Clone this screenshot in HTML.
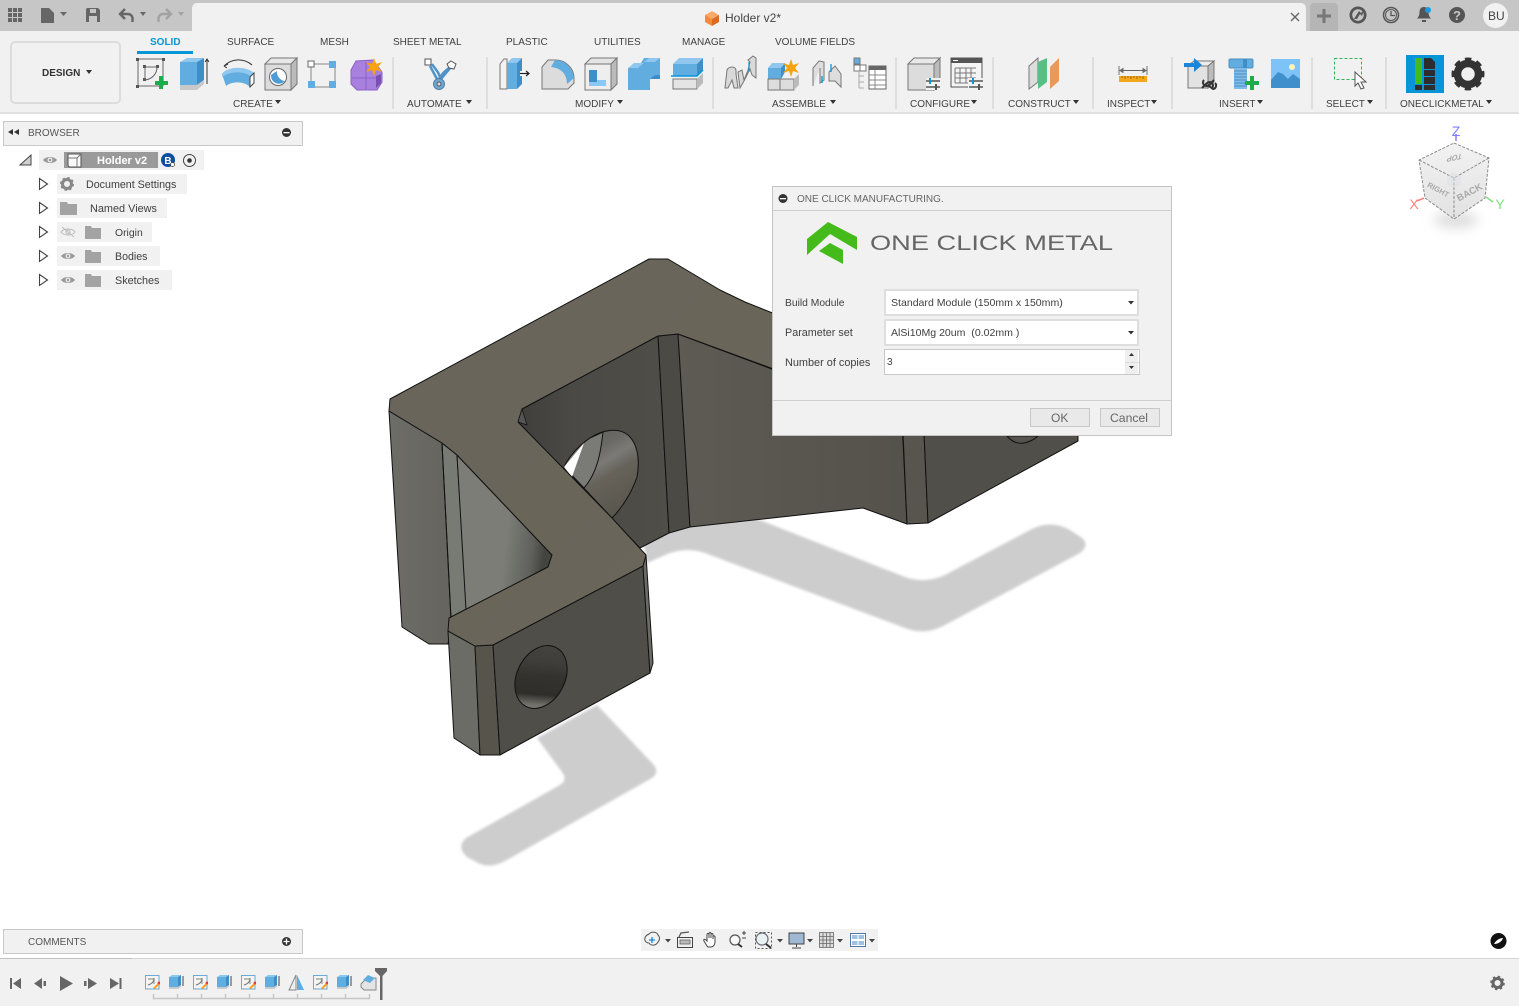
<!DOCTYPE html>
<html><head><meta charset="utf-8"><title>Holder v2</title>
<style>
html,body{margin:0;padding:0;background:#fff;width:1519px;height:1006px;overflow:hidden;font-family:"Liberation Sans",Arial,sans-serif}
#a{position:relative;width:1519px;height:1006px;overflow:hidden}
.b{position:absolute}
.t{position:absolute;white-space:nowrap;font-size:10px;line-height:12px;color:#3f3f3f}
svg{position:absolute;left:0;top:0}
.sel{position:absolute;left:884px;width:251px;background:#fff;border:2px solid #dedede}
</style></head><body><div id="a">

<!-- 3D model -->
<svg width="1519" height="1006" viewBox="0 0 1519 1006">
<defs>
<filter id="bl" x="-5%" y="-5%" width="110%" height="110%"><feGaussianBlur stdDeviation="1.2"/></filter>
<filter id="bl2" x="-40%" y="-80%" width="180%" height="260%"><feGaussianBlur stdDeviation="6"/></filter>
<linearGradient id="top" x1="0" y1="0" x2="1" y2="1"><stop offset="0" stop-color="#69655c"/><stop offset=".5" stop-color="#696559"/><stop offset="1" stop-color="#6a665b"/></linearGradient>
<linearGradient id="inL" x1="0" y1="0" x2="1" y2="0"><stop offset="0" stop-color="#3f3e3b"/><stop offset=".35" stop-color="#4a4945"/><stop offset="1" stop-color="#4f4e48"/></linearGradient>
<linearGradient id="inR" x1="0" y1="0" x2="1" y2="0"><stop offset="0" stop-color="#5d5b54"/><stop offset=".3" stop-color="#5a5850"/><stop offset="1" stop-color="#54524b"/></linearGradient>
<linearGradient id="tri" x1="0" y1="0" x2="1" y2=".2"><stop offset="0" stop-color="#7b7d76"/><stop offset=".6" stop-color="#7b7d76"/><stop offset=".88" stop-color="#5f605b"/><stop offset="1" stop-color="#444440"/></linearGradient>
<linearGradient id="wl" x1="0" y1="0" x2="1" y2="0"><stop offset="0" stop-color="#6d6d68"/><stop offset="1" stop-color="#65645e"/></linearGradient>
<linearGradient id="hb" x1="0" y1="0" x2=".5" y2="1"><stop offset="0" stop-color="#5c5b57"/><stop offset=".35" stop-color="#6a6966"/><stop offset=".5" stop-color="#7b7a76"/><stop offset=".65" stop-color="#66635b"/><stop offset="1" stop-color="#5a574f"/></linearGradient>
<linearGradient id="hf" x1=".3" y1="0" x2=".6" y2="1"><stop offset="0" stop-color="#45443f"/><stop offset=".3" stop-color="#3e3d39"/><stop offset=".5" stop-color="#33322e"/><stop offset=".78" stop-color="#2f2e2b"/><stop offset=".93" stop-color="#6f6e69"/><stop offset="1" stop-color="#7b7a74"/></linearGradient>
<linearGradient id="cube" x1="0" y1="0" x2="0" y2="1"><stop offset="0" stop-color="#f2f2f2"/><stop offset="1" stop-color="#e2e2e2"/></linearGradient>
</defs>

<!-- shadows -->
<g filter="url(#bl)" fill="#cdcdcd">
<path d="M640 520L757 519L905 577Q925 584 945 575L1030 530Q1050 519 1070 530L1082 538Q1090 545 1080 553L945 625Q925 636 905 628L705 553Q685 546 665 555L647 563Z"/>
<path d="M537 738L597 705L653 764Q660 772 652 778L505 861Q490 869 478 863L467 857Q456 847 466 838L560 785Q568 780 562 772Z"/>
</g>

<g stroke="#111" stroke-width="1" stroke-linejoin="round">
<!-- inner back walls -->
<polygon points="522,409 658,336 669,533 640,548 518,422" fill="url(#inL)"/>
<polygon points="658,336 678,334 690,527 669,533" fill="#4c4a45"/>
<polygon points="678,334 780,372 902,420 907,524 863,508 690,527" fill="url(#inR)"/>
<polygon points="902,410 923,410 928,523 907,524" fill="#58554e"/>
<polygon points="923,410 1078,410 1078,441 928,523" fill="#504f49"/>
<path d="M1007 436C1012 442 1018 444 1024 443C1030 442 1036 438 1038 436Z" fill="#55534e"/>
<!-- through hole -->
<path d="M564 467C570 455 580 445 590 438C602 430 618 427 628 435C638 444 640 460 637 477C632 492 622 508 612 518Z" fill="url(#hb)"/>
<path d="M603 432C601 450 598 472 584 488L564 467C570 455 580 445 590 438Z" fill="#7a7a76"/>
<polygon points="564,467 584,443 572,477" fill="#fff" stroke="none"/>
<!-- left wall -->
<polygon points="389,411 442,443 452,620 448,644 429,644 402,627" fill="url(#wl)"/>
<polygon points="442,443 457,455 467,612 449,622 452,640" fill="#787a74"/>
<polygon points="457,455 552,555 548,567 466,610" fill="url(#tri)"/>
<line x1="442" y1="443" x2="451" y2="618"/>
<!-- front faces -->
<polygon points="448,631 475,646 480,755 454,738" fill="#6c6c67"/>
<polygon points="475,646 493,645 500,755 480,755" fill="#57544c"/>
<polygon points="493,645 643,566 650,673 500,755" fill="#4f4e48"/>
<polygon points="643,566 646,555 653,663 650,673" fill="#6c6c66"/>
<!-- top face -->
<polygon points="390,399 649,259 668,259 720,290 745,302 790,320 790,375 678,334 658,336 522,409 518,422 612,518 646,555 643,566 493,645 475,646 448,631 449,618 548,567 552,555 457,455 442,443 389,411" fill="url(#top)"/>
<!-- front hole -->
<ellipse cx="541" cy="677" rx="24" ry="33" transform="rotate(27 541 677)" fill="url(#hf)"/>
<polygon points="518,422 522,409 527,425" fill="#555" stroke-width=".7"/>
</g>
</svg>

<!-- top bar -->
<div class="b" style="left:0;top:0;width:1519px;height:31px;background:#c6c6c6"></div>
<div class="b" style="left:192px;top:3px;width:1114px;height:28px;background:#f1f1f1;border-radius:5px 5px 0 0"></div>
<div class="b" style="left:1310px;top:3px;width:28px;height:28px;background:#b5b5b5;border-radius:4px 4px 0 0"></div>
<div class="b" style="left:1483px;top:3px;width:25px;height:25px;background:#f1f1f1;border-radius:50%"></div>
<div class="t" style="left:1488px;top:9px;font-size:12px;line-height:14px;color:#444">BU</div>
<div class="t" style="left:725px;top:11px;font-size:12px;line-height:14px;color:#444">Holder v2*</div>

<!-- toolbar -->
<div class="b" style="left:0;top:31px;width:1519px;height:81px;background:#f1f1f1;border-bottom:2px solid #e0e0e0"></div>
<div class="b" style="left:10px;top:41px;width:107px;height:59px;border:2px solid #dcdcdc;border-radius:5px"></div>
<div class="t" style="left:42px;top:68px;font-weight:bold;color:#333">DESIGN</div>
<div class="t" style="left:150px;top:37px;color:#0696d7;font-weight:bold">SOLID</div>
<div class="b" style="left:137px;top:51px;width:56px;height:3px;background:#0696d7"></div>
<div class="t" style="left:227px;top:37px">SURFACE</div>
<div class="t" style="left:320px;top:37px">MESH</div>
<div class="t" style="left:393px;top:37px">SHEET METAL</div>
<div class="t" style="left:506px;top:37px">PLASTIC</div>
<div class="t" style="left:594px;top:37px">UTILITIES</div>
<div class="t" style="left:682px;top:37px">MANAGE</div>
<div class="t" style="left:775px;top:37px">VOLUME FIELDS</div>

<div class="t" style="left:233px;top:99px">CREATE</div>
<div class="t" style="left:407px;top:99px">AUTOMATE</div>
<div class="t" style="left:575px;top:99px">MODIFY</div>
<div class="t" style="left:772px;top:99px">ASSEMBLE</div>
<div class="t" style="left:910px;top:99px">CONFIGURE</div>
<div class="t" style="left:1008px;top:99px">CONSTRUCT</div>
<div class="t" style="left:1107px;top:99px">INSPECT</div>
<div class="t" style="left:1219px;top:99px">INSERT</div>
<div class="t" style="left:1326px;top:99px">SELECT</div>
<div class="t" style="left:1400px;top:99px">ONECLICKMETAL</div>

<!-- browser -->
<div class="b" style="left:3px;top:121px;width:298px;height:23px;background:#f1f1f1;border:1px solid #c8c8c8"></div>
<div class="t" style="left:28px;top:128px;color:#555">BROWSER</div>
<div class="b" style="left:39px;top:150px;width:165px;height:20px;background:#f1f1f1"></div>
<div class="b" style="left:64px;top:152px;width:94px;height:16px;background:#9a9a9a"></div>
<div class="t" style="left:97px;top:155px;color:#fff;font-weight:bold;font-size:11px">Holder v2</div>
<div class="b" style="left:57px;top:174px;width:130px;height:20px;background:#f1f1f1"></div>
<div class="t" style="left:86px;top:179px;font-size:10.7px">Document Settings</div>
<div class="b" style="left:57px;top:198px;width:110px;height:20px;background:#f1f1f1"></div>
<div class="t" style="left:90px;top:203px;font-size:10.9px">Named Views</div>
<div class="b" style="left:57px;top:222px;width:95px;height:20px;background:#f1f1f1"></div>
<div class="t" style="left:115px;top:228px;font-size:10.4px">Origin</div>
<div class="b" style="left:57px;top:246px;width:103px;height:20px;background:#f1f1f1"></div>
<div class="t" style="left:115px;top:251px;font-size:10.6px">Bodies</div>
<div class="b" style="left:57px;top:270px;width:115px;height:20px;background:#f1f1f1"></div>
<div class="t" style="left:115px;top:275px;font-size:10.8px">Sketches</div>

<!-- comments -->
<div class="b" style="left:3px;top:929px;width:298px;height:23px;background:#f1f1f1;border:1px solid #c8c8c8"></div>
<div class="t" style="left:28px;top:937px;color:#555">COMMENTS</div>
<div class="b" style="left:641px;top:929px;width:237px;height:22px;background:#f1f1f1"></div>

<!-- timeline -->
<div class="b" style="left:0;top:958px;width:1519px;height:48px;background:#f1f1f1;border-top:1px solid #d4d4d4;box-sizing:border-box"></div>
<div class="b" style="left:0;top:958px;width:132px;height:1px;background:#c0c0c0"></div>

<!-- dialog -->
<div class="b" style="left:772px;top:186px;width:398px;height:248px;background:#f1f1f1;border:1px solid #c4c4c4"></div>
<div class="b" style="left:773px;top:210px;width:398px;height:1px;background:#cfcfcf"></div>
<div class="t" style="left:797px;top:194px;color:#666">ONE CLICK MANUFACTURING.</div>
<div class="t" style="left:785px;top:298px;font-size:10.3px">Build Module</div>
<div class="t" style="left:785px;top:327px;font-size:10.8px">Parameter set</div>
<div class="t" style="left:785px;top:357px;font-size:10.9px">Number of copies</div>
<div class="sel" style="top:289px;height:23px"></div>
<div class="sel" style="top:319px;height:23px"></div>
<div class="t" style="left:891px;top:297px;font-size:10.55px">Standard Module (150mm x 150mm)</div>
<div class="t" style="left:891px;top:327px;font-size:10.55px">AlSi10Mg 20um&nbsp; (0.02mm )</div>
<div class="b" style="left:884px;top:349px;width:254px;height:24px;background:#fff;border:1px solid #c8c8c8"></div>
<div class="b" style="left:1125px;top:350px;width:13px;height:24px;background:#efefef"></div>
<div class="t" style="left:887px;top:357px">3</div>
<div class="b" style="left:773px;top:400px;width:398px;height:1px;background:#cfcfcf"></div>
<div class="b" style="left:1030px;top:408px;width:58px;height:17px;background:#e9e9e9;border:1px solid #c8c8c8"></div>
<div class="t" style="left:1051px;top:411px;font-size:12px;line-height:14px;color:#666">OK</div>
<div class="b" style="left:1100px;top:408px;width:58px;height:17px;background:#e9e9e9;border:1px solid #c8c8c8"></div>
<div class="t" style="left:1110px;top:411px;font-size:12.2px;line-height:14px;color:#666">Cancel</div>

<!-- icons -->
<svg width="1519" height="1006" viewBox="0 0 1519 1006">
<defs>
<symbol id="sk" viewBox="0 0 15 16" width="15" height="16"><rect x=".5" y="1.5" width="13.5" height="13.5" fill="#f4f4f4" stroke="#6aa9d8"/><path d="M3 5h6v5" fill="none" stroke="#888"/><path d="M9 4C9 8 7 10 3 11" fill="none" stroke="#777"/><path d="M8 14l5-5 2 1-5 5z" fill="#f5a623"/><circle cx="14" cy="9" r="1.4" fill="#e33"/></symbol>
<symbol id="ex" viewBox="0 0 15 16" width="15" height="16"><polygon points="0,3 3,1 12,1 9,3" fill="#8fc7ef"/><rect x="0" y="3" width="9" height="10" fill="#62addf"/><polygon points="9,3 12,1 12,11 9,13" fill="#3e8ec9"/><polygon points="0,13 9,13 12,11 12,13 9,15 0,15" fill="#c9c9c9"/><path d="M14 2v10" stroke="#444"/></symbol>
</defs>

<!-- top bar icons -->
<g fill="#666"><rect x="8" y="8" width="4" height="4"/><rect x="13" y="8" width="4" height="4"/><rect x="18" y="8" width="4" height="4"/><rect x="8" y="13" width="4" height="4"/><rect x="13" y="13" width="4" height="4"/><rect x="18" y="13" width="4" height="4"/><rect x="8" y="18" width="4" height="4"/><rect x="13" y="18" width="4" height="4"/><rect x="18" y="18" width="4" height="4"/>
<path d="M41 8h8l5 5v10h-13z"/><polygon points="60,12 67,12 63.5,16"/>
<path d="M87 8h11l2 2v12h-14v-13z"/>
<polygon points="140,12 146,12 143,16" fill="#666"/></g>
<rect x="90" y="9" width="6" height="4" fill="#c6c6c6"/><rect x="89" y="16" width="8" height="6" fill="#c6c6c6"/>
<path d="M125 9l-5 5 5 5M120 14h8a4.500 4.500 0 0 1 4.500 4.500v3.500" fill="none" stroke="#666" stroke-width="2.400"/>
<path d="M166 9l5 5-5 5M171 14h-8a4.500 4.500 0 0 0-4.500 4.500v3.500" fill="none" stroke="#a2a2a2" stroke-width="2.400"/>
<polygon points="178,12 184,12 181,16" fill="#a2a2a2"/>
<polygon points="712,11 719,15 712,19 705,15" fill="#fba968"/><polygon points="705,15 712,19 712,26 705,22" fill="#f58a3e"/><polygon points="719,15 712,19 712,26 719,22" fill="#dc6a20"/>
<path d="M1291 13l8 8M1299 13l-8 8" stroke="#666" stroke-width="1.400"/>
<path d="M1324 9v14M1317 16h14" stroke="#777" stroke-width="3"/>
<circle cx="1358" cy="15" r="7" fill="none" stroke="#555" stroke-width="2.500"/><path d="M1354 19l5-8 2 2 3-3-2 6-2-2-3 5z" fill="#555"/><circle cx="1358" cy="15" r="8" fill="none" stroke="#555"/>
<circle cx="1391" cy="15" r="7.500" fill="none" stroke="#555" stroke-width="1.500"/><circle cx="1391" cy="15" r="5.500" fill="none" stroke="#555"/><path d="M1391 11v4.500h4" fill="none" stroke="#555" stroke-width="1.300"/>
<path d="M1424 7c-3 0-4.500 2-4.500 5 0 3-1 5-2.500 6.500h14c-1.500-1.500-2.500-3.500-2.500-6.500 0-3-1.500-5-4.500-5z" fill="#555"/><rect x="1422" y="20" width="4" height="2" fill="#555"/><circle cx="1428" cy="10" r="3" fill="#1b9be2"/>
<circle cx="1457" cy="15" r="8" fill="#555"/><text x="1457" y="20" text-anchor="middle" font-family="Liberation Sans" font-weight="bold" font-size="13" fill="#c6c6c6">?</text>

<!-- carets -->
<g fill="#333"><polygon points="86,70 92,70 89,74"/><polygon points="275,100 281,100 278,104"/><polygon points="466,100 472,100 469,104"/><polygon points="617,100 623,100 620,104"/><polygon points="830,100 836,100 833,104"/><polygon points="971,100 977,100 974,104"/><polygon points="1073,100 1079,100 1076,104"/><polygon points="1151,100 1157,100 1154,104"/><polygon points="1257,100 1263,100 1260,104"/><polygon points="1367,100 1373,100 1370,104"/><polygon points="1486,100 1492,100 1489,104"/></g>
<!-- separators -->
<g fill="#dedede"><rect x="392" y="57" width="2" height="52"/><rect x="486" y="57" width="2" height="52"/><rect x="712" y="57" width="2" height="52"/><rect x="895" y="57" width="2" height="52"/><rect x="992" y="57" width="2" height="52"/><rect x="1092" y="57" width="2" height="52"/><rect x="1171" y="57" width="2" height="52"/><rect x="1311" y="57" width="2" height="52"/><rect x="1385" y="57" width="2" height="52"/></g>

<!-- CREATE -->
<rect x="138" y="59" width="25" height="27" fill="none" stroke="#666"/>
<g fill="#555"><rect x="136" y="58" width="3" height="3"/><rect x="162" y="58" width="3" height="3"/><rect x="136" y="85" width="3" height="3"/><rect x="143" y="65" width="3" height="3"/><rect x="156" y="65" width="3" height="3"/><rect x="143" y="78" width="3" height="3"/></g>
<path d="M145 67h12M157 67C157 73 153 79 145 80M145 67v13" fill="none" stroke="#666"/>
<path d="M161 76v13M155 83h13" stroke="#1faa4c" stroke-width="4"/>
<polygon points="180,62 187,58 204,58 197,62" fill="#8fc7ef"/><rect x="180" y="62" width="17" height="23" fill="#62addf"/><polygon points="197,62 204,58 204,80 197,85" fill="#3e8ec9"/><polygon points="180,85 197,85 204,80 204,84 197,90 180,90" fill="#c8c8c8"/><path d="M207 84V60M205 62l2-3 2 3" fill="none" stroke="#333" stroke-width="1"/>
<path d="M222 74C228 66 246 66 254 73L250 87C244 81 232 81 226 86Z" fill="#62addf"/><path d="M222 74C228 66 246 66 254 73L250 76C244 71 230 71 222 77Z" fill="#8fc7ef"/><path d="M224 66C232 58 244 58 252 65M224 66l4-2M224 66l3 2" fill="none" stroke="#333"/><path d="M250 77l4-4v10l-4 4z" fill="#fff" stroke="#444"/>
<polygon points="265,64 271,58 297,58 291,64" fill="#e8e8e8" stroke="#777"/><rect x="265" y="64" width="26" height="26" fill="#dcdcdc" stroke="#777"/><polygon points="291,64 297,58 297,84 291,90" fill="#bbb" stroke="#777"/><circle cx="278" cy="77" r="8.500" fill="#fff" stroke="#666"/><path d="M271 75a8 8 0 0 0 14 6 9 9 0 0 1-8-10z" fill="#4e9bd6"/>
<path d="M311 64h21M311 64v23M311 87h21M335 64v23" stroke="#888" fill="none"/><rect x="308" y="61" width="6" height="6" fill="#fff" stroke="#666"/><rect x="329" y="61" width="7" height="7" fill="#62addf"/><rect x="308" y="81" width="7" height="7" fill="#62addf"/><rect x="329" y="81" width="7" height="7" fill="#62addf"/>
<path d="M351 70l5-9 17-1 9 12v10l-5 8h-20l-6-6z" fill="#a880de" stroke="#8a5fc8"/><path d="M352 78h28M366 62v27" stroke="#8a5fc8"/><path d="M376 76v12l5-5v-9z" fill="#7a4fb4"/>
<polygon points="374,58 376,64 382,62 378,67 382,72 376,70 374,76 372,70 366,72 370,67 366,62 372,64" fill="#f9a30e"/>

<!-- AUTOMATE -->
<path d="M430 66l7 13M451 67l-10 12M439 78v7M432 64c3 5 8 9 8 15M449 68c-5 4-8 6-9 12" fill="none" stroke="#4f93c8" stroke-width="2.500"/><rect x="425" y="59" width="6" height="6" fill="#fff" stroke="#555"/><polygon points="451,61 456,64 454,69 449,68 447,64" fill="#fff" stroke="#555"/><circle cx="439" cy="84" r="5.500" fill="#6fa7d4" stroke="#4f7ea8"/><circle cx="439" cy="84" r="2" fill="#ddd" stroke="#555"/>

<!-- MODIFY -->
<path d="M500 64l4-5h3v30h-7z" fill="#f2f2f2" stroke="#777"/><polygon points="507,63 512,58 522,58 517,63" fill="#8fc7ef"/><rect x="507" y="63" width="10" height="26" fill="#62addf"/><polygon points="517,63 522,58 522,84 517,89" fill="#3e8ec9"/><rect x="520" y="71" width="8" height="5" fill="#fff"/><path d="M520 73.500h9M526 71l3 2.500-3 2.500" fill="none" stroke="#222" stroke-width="1.200"/>
<path d="M542 67l6-7h8c9 0 18 8 18 18v5l-6 6h-26z" fill="#dcdcdc" stroke="#777"/><path d="M555 60c10 0 18 8 19 18l-7 6c0-10-6-16-16-17z" fill="#62addf"/>
<polygon points="585,64 591,58 617,58 611,64" fill="#e4e4e4" stroke="#777"/><rect x="585" y="64" width="26" height="26" fill="#eee" stroke="#777"/><polygon points="611,64 617,58 617,84 611,90" fill="#bbb" stroke="#777"/><polygon points="589,70 597,70 597,80 606,80 606,86 589,86" fill="#8ac8f4"/><rect x="589" y="70" width="8" height="12" fill="#3e8ec9"/>
<polygon points="638,68 644,58 660,58 660,79 650,79 650,90 628,90 628,68" fill="#62addf"/><polygon points="628,68 634,63 644,63 638,68" fill="#8fc7ef"/><polygon points="644,62 649,58 660,58 655,62" fill="#8fc7ef"/><polygon points="650,79 655,75 660,75 660,79" fill="#3e8ec9"/>
<polygon points="673,64 679,58 703,58 697,64" fill="#8fc7ef"/><rect x="673" y="64" width="24" height="12" fill="#62addf"/><polygon points="697,64 703,58 703,70 697,76" fill="#3e8ec9"/><path d="M671 76h26l6-6" fill="none" stroke="#0696d7" stroke-width="1.500"/><rect x="673" y="79" width="24" height="10" fill="#e4e4e4" stroke="#777"/><polygon points="697,79 703,73 703,83 697,89" fill="#bbb"/>

<!-- ASSEMBLE -->
<g fill="#d9d9d9" stroke="#777"><path d="M725 88l2-18c2-4 8-4 9 0v4l2 14h-4l-2-8-4 8z"/><path d="M740 88l-2-16 4-2 2 10 4-10 2-8-2-2 5-4 3 2v20l-4-3-2-6-6 12z"/></g><path d="M749 62v10" stroke="#0696d7" stroke-width="1.200"/>
<polygon points="768,68 772,63 785,63 781,68" fill="#8fc7ef"/><rect x="768" y="68" width="13" height="11" fill="#62addf"/><polygon points="781,68 785,63 785,72 781,79" fill="#3e8ec9"/><rect x="768" y="79" width="12" height="11" fill="#ddd" stroke="#777"/><rect x="780" y="79" width="14" height="11" fill="#ddd" stroke="#777"/><polygon points="794,79 799,74 799,85 794,90" fill="#bbb"/>
<polygon points="791,59 793,65 799,63 795,68 799,73 793,71 791,77 789,71 783,73 787,68 783,63 789,65" fill="#f9a30e"/>
<path d="M813 86V68l6-7 5 1v18l-4 3v-15" fill="#ddd" stroke="#777"/><path d="M829 72l6-6 6 8v13l-6-6h-6z" fill="#ddd" stroke="#777"/><path d="M822 76v7M831 64v8" stroke="#0696d7" stroke-width="1.300"/>
<rect x="854" y="58" width="6" height="6" fill="#62addf" stroke="#777"/><rect x="854" y="65" width="6" height="6" fill="#fff" stroke="#777"/><rect x="860" y="65" width="6" height="6" fill="#fff" stroke="#777"/><path d="M859 71v17M859 76h5M859 82h5M859 88h5" stroke="#aaa" fill="none"/><rect x="869" y="66" width="17" height="23" fill="#fff" stroke="#666"/><rect x="869" y="66" width="17" height="4" fill="#666"/><path d="M869 75h17M869 80h17M869 85h17M875 70v19" stroke="#888"/>

<!-- CONFIGURE -->
<polygon points="908,64 914,58 940,58 934,64" fill="#e8e8e8" stroke="#777"/><rect x="908" y="64" width="26" height="26" fill="#dcdcdc" stroke="#777"/><polygon points="934,64 940,58 940,84 934,90" fill="#bbb" stroke="#777"/>
<rect x="926" y="78" width="15" height="12" fill="#f1f1f1"/><path d="M926 81h14M926 87h14" stroke="#555" stroke-width="1.500"/><rect x="929" y="78" width="2" height="6" fill="#0696d7"/><rect x="935" y="84" width="2" height="6" fill="#555"/>
<rect x="951" y="58" width="31" height="29" fill="#f4f4f4" stroke="#555"/><rect x="951" y="58" width="31" height="5" fill="#555"/><rect x="953" y="60" width="5" height="1" fill="#fff"/><path d="M955 68h21M955 73h21M955 78h21M955 83h15M955 68v15M960 68v15M966 68v15M971 68v15" stroke="#777" fill="none"/>
<rect x="968" y="78" width="15" height="12" fill="#f1f1f1"/><path d="M969 81h14M969 87h14" stroke="#555" stroke-width="1.500"/><rect x="972" y="78" width="2" height="6" fill="#0696d7"/><rect x="978" y="84" width="2" height="6" fill="#555"/>

<!-- CONSTRUCT -->
<polygon points="1029,66 1038,58 1038,82 1029,89" fill="#ddd" stroke="#777"/><polygon points="1038,62 1047,58 1047,82 1038,89" fill="#57c084"/><polygon points="1050,67 1059,58 1059,81 1050,89" fill="#e89a5c"/>

<!-- INSPECT -->
<rect x="1119" y="76" width="28" height="6" fill="#f5a81c"/><path d="M1119 66v9M1147 66v9M1120 70.500h26M1120 70.500l3-2v4zM1146 70.500l-3-2v4z" stroke="#666" fill="#666" stroke-width=".9"/><path d="M1122 76v2M1125 76v3M1128 76v2M1131 76v3M1134 76v2M1137 76v3M1140 76v2M1143 76v3" stroke="#a06a00"/>

<!-- INSERT -->
<polygon points="1188,66 1194,61 1214,61 1208,66" fill="#ececec" stroke="#777"/><rect x="1188" y="66" width="20" height="22" fill="#e2e2e2" stroke="#777"/><polygon points="1208,66 1214,61 1214,82 1208,88" fill="#bbb" stroke="#777"/>
<path d="M1184 63h10v-5l8 7-8 7v-5h-10z" fill="#1b86d6"/>
<path d="M1202 88l5-5a3.500 3.500 0 0 1 5 5M1214 80l-5 5a3.500 3.500 0 0 1-5-5M1209 86l4 3a3.500 3.500 0 0 0 2-6" fill="none" stroke="#333" stroke-width="2"/>
<rect x="1229" y="59" width="24" height="9" rx="1.500" fill="#62addf" stroke="#4f8fc0"/><rect x="1234" y="68" width="13" height="21" fill="#7fbce8"/><path d="M1234 71h13M1234 74h13M1234 77h13M1234 80h13M1234 83h13M1234 86h13" stroke="#4f8fc0"/><rect x="1243" y="59" width="4" height="9" fill="#3e8ec9"/>
<path d="M1252 76v14M1245 83h14" stroke="#1faa4c" stroke-width="4"/>
<rect x="1271" y="59" width="29" height="29" fill="#7dc3f8"/><path d="M1271 80l7-8 5 2 5 5 5-5 7 5v9h-29z" fill="#3f8fcc"/><circle cx="1292" cy="67" r="3" fill="#fff3b8"/>

<!-- SELECT -->
<rect x="1334.500" y="58.500" width="27" height="21" fill="none" stroke="#31b45b" stroke-dasharray="3 2"/>
<path d="M1355 72l0 14 3-3 3 6 3-1-3-6h5z" fill="#fff" stroke="#555"/>

<!-- ONECLICKMETAL -->
<rect x="1406" y="55" width="38" height="38" fill="#0696d7"/><rect x="1415" y="58" width="7" height="26" fill="#44bb1a"/><path d="M1424 58h7l4 4v7h-11zM1424 70h11v6h-11zM1424 77h11v7h-11zM1415 85h7v5h-7zM1424 85h11v5h-11z" fill="#2d2d2d"/>
<circle cx="1468" cy="74" r="10.500" fill="none" stroke="#333" stroke-width="7.500"/><circle cx="1468" cy="74" r="14" fill="none" stroke="#333" stroke-width="5" stroke-dasharray="6 5" stroke-dashoffset="3"/>

<!-- browser icons -->
<polygon points="13,129 8,132 13,135" fill="#333"/><polygon points="19,129 14,132 19,135" fill="#333"/>
<circle cx="286.500" cy="132.500" r="4.500" fill="#333"/><rect x="283.500" y="132" width="6" height="1.300" fill="#fff"/>
<path d="M20 165h11v-10z" fill="#cfcfcf" stroke="#444"/>
<g fill="none" stroke="#444" stroke-width="1.100"><path d="M39.500 178.500l8 5.500-8 5.500zM39.500 202.500l8 5.500-8 5.500zM39.500 226.500l8 5.500-8 5.500zM39.500 250.500l8 5.500-8 5.500zM39.500 274.500l8 5.500-8 5.500z" fill="#fff"/></g>
<g id="eyes">
<path d="M43 160c3-4 11-4 14 0-3 4-11 4-14 0z" fill="#999"/><circle cx="50" cy="160" r="2.500" fill="#f1f1f1"/><circle cx="50" cy="160" r="1.300" fill="#999"/>
<path d="M61 256c3-4 11-4 14 0-3 4-11 4-14 0z" fill="#999"/><circle cx="68" cy="256" r="2.500" fill="#f1f1f1"/><circle cx="68" cy="256" r="1.300" fill="#999"/>
<path d="M61 280c3-4 11-4 14 0-3 4-11 4-14 0z" fill="#999"/><circle cx="68" cy="280" r="2.500" fill="#f1f1f1"/><circle cx="68" cy="280" r="1.300" fill="#999"/>
<path d="M61 232c3-4 11-4 14 0-3 4-11 4-14 0z" fill="none" stroke="#bbb"/><circle cx="68" cy="232" r="2" fill="none" stroke="#bbb"/><path d="M62 227l12 10" stroke="#bbb"/>
</g>
<path d="M68 154h13v13h-11c-1 0-2-1-2-2z" fill="#f8f8f8" stroke="#555"/><path d="M68 158h9v9M77 158l4-4" fill="none" stroke="#777"/>
<circle cx="168" cy="160" r="7" fill="#0d4f9e"/><text x="168" y="164" text-anchor="middle" font-family="Liberation Sans" font-weight="bold" font-size="10" fill="#fff">B</text><circle cx="172.500" cy="164.500" r="2" fill="#fff" stroke="#333" stroke-width=".7"/>
<circle cx="189.500" cy="160.500" r="6" fill="none" stroke="#444"/><circle cx="189.500" cy="160.500" r="2.300" fill="#333"/>
<circle cx="67" cy="184" r="4.500" fill="none" stroke="#888" stroke-width="3"/><circle cx="67" cy="184" r="6" fill="none" stroke="#888" stroke-width="2" stroke-dasharray="2.360 2.360"/>
<g fill="#a3a3a3"><path d="M60 202h7l1 2h9v11h-17z"/><path d="M85 226h6l1 2h9v11h-16z"/><path d="M85 250h6l1 2h9v11h-16z"/><path d="M85 274h6l1 2h9v11h-16z"/></g>
<circle cx="286.500" cy="941.500" r="4.500" fill="#333"/><path d="M283.500 941.500h6M286.500 938.500v6" stroke="#fff" stroke-width="1.300"/>

<!-- dialog graphics -->
<circle cx="783" cy="198.500" r="4.500" fill="#333"/><rect x="780" y="198" width="6" height="1.300" fill="#fff"/>
<polygon points="807,239 828,222 857,237 857,250 830,234 807,255" fill="#44bb1a"/>
<polygon points="819,251 830,243 843,250 843,264" fill="#44bb1a"/>
<text x="870" y="250" font-family="Liberation Sans" font-size="21.500" fill="#666" textLength="243" lengthAdjust="spacingAndGlyphs">ONE CLICK METAL</text>
<polygon points="1128,301 1134,301 1131,304.500" fill="#333"/><polygon points="1128,331 1134,331 1131,334.500" fill="#333"/>
<polygon points="1129,356 1134,356 1131.500,353" fill="#333"/><polygon points="1129,366 1134,366 1131.500,369" fill="#333"/><path d="M1125 362.500h14" stroke="#dcdcdc"/>

<!-- view cube -->
<ellipse cx="1456" cy="220" rx="22" ry="8" fill="#c4c4c4" opacity=".6" filter="url(#bl2)"/>
<polygon points="1454,143 1489,158 1485,198 1454,219 1425,198 1419,160" fill="url(#cube)"/>
<path d="M1454 143L1489 158 1485 198 1454 219 1425 198 1419 160ZM1419 160L1454 178 1489 158M1454 178V219" fill="none" stroke="#8a8a8a" stroke-dasharray="3 1.500"/>
<polygon points="1454,172 1461,176 1461,184 1454,188 1447,184 1447,176" fill="#dde0e5" opacity=".5"/>
<path d="M1456 141v-7" stroke="#8080ff" stroke-width="1.500"/><path d="M1424 198l-7 3" stroke="#ff8080" stroke-width="1.500"/><path d="M1486 197l7 5" stroke="#7fe07f" stroke-width="1.500"/>
<text x="1456" y="136" text-anchor="middle" font-family="Liberation Sans" font-size="14" fill="#8080ff">Z</text>
<text x="1414" y="209" text-anchor="middle" font-family="Liberation Sans" font-size="14" fill="#ff8080">X</text>
<text x="1500" y="209" text-anchor="middle" font-family="Liberation Sans" font-size="14" fill="#7fe07f">Y</text>
<text transform="translate(1455 155) rotate(168) skewX(-25)" text-anchor="middle" font-family="Liberation Sans" font-size="7.500" font-weight="bold" fill="#a8a8a8">TOP</text>
<text transform="translate(1437 192) rotate(28)" text-anchor="middle" font-family="Liberation Sans" font-size="7.500" font-weight="bold" fill="#a8a8a8">RIGHT</text>
<text transform="translate(1471 195) rotate(-28)" text-anchor="middle" font-family="Liberation Sans" font-size="9.500" font-weight="bold" fill="#a8a8a8">BACK</text>

<!-- nav bar -->
<path d="M649 934c3-3 8-2 9 1 2 2 2 5 0 7-2 4-7 4-9 1-3 0-5-3-4-5 0-2 2-3 4-4z" fill="none" stroke="#555"/><path d="M649 940h6M652 937v6" stroke="#1b86d6" stroke-width="1.300"/>
<g fill="#444"><polygon points="665,939 671,939 668,942.500"/><polygon points="777,939 783,939 780,942.500"/><polygon points="807,939 813,939 810,942.500"/><polygon points="837,939 843,939 840,942.500"/><polygon points="869,939 875,939 872,942.500"/></g>
<rect x="677.500" y="937.500" width="15" height="10" fill="#eee" stroke="#444"/><rect x="680" y="940" width="10" height="4" fill="#bbb" stroke="#555" stroke-width=".7"/><path d="M679 937l2-4 8-1" fill="none" stroke="#555" stroke-width="1.300"/>
<path d="M707 946l-3-5c-1-2 1-2 2-1l1 1v-6c0-2 2-2 2 0v3-4c0-2 2-2 2 0v4-3c0-2 2-2 2 0v4-2c0-1.500 2-1.500 2 0v5c0 3-2 5-4 5h-3z" fill="#fff" stroke="#444"/>
<circle cx="735" cy="940" r="5" fill="#f8f8f8" stroke="#555" stroke-width="1.200"/><path d="M738 944l4 3" stroke="#333" stroke-width="2"/><path d="M742 933h4M744 931v4M742 938h4" stroke="#444"/>
<circle cx="762" cy="939" r="6" fill="#e9f1f3" stroke="#667" stroke-width="1.200"/><path d="M766 944l5 4" stroke="#333" stroke-width="2"/><rect x="755.500" y="932.500" width="16" height="16" fill="none" stroke="#555" stroke-dasharray="2 2"/>
<rect x="789" y="933" width="15" height="11" fill="#9fb9d4" stroke="#444"/><path d="M796.500 944v3M792 948h9" stroke="#444"/>
<path d="M819.500 932.500h14v15h-14zM819.500 936.500h14M819.500 940h14M819.500 943.500h14M823 932.500v15M826.500 932.500v15M830 932.500v15" fill="#ddd" stroke="#666" stroke-width=".8"/>
<rect x="850.500" y="933.500" width="15" height="13" fill="#fff" stroke="#4b79a8"/><rect x="852" y="935" width="5.500" height="4" fill="#9fc0e0"/><rect x="858.500" y="935" width="5.500" height="4" fill="#9fc0e0"/><rect x="852" y="941" width="5.500" height="4" fill="#9fc0e0"/><rect x="858.500" y="941" width="5.500" height="4" fill="#9fc0e0"/>

<!-- chat -->
<circle cx="1498.500" cy="941" r="8" fill="#111"/><path d="M1494 944c2-4 6-6 9-6-1 3-4 6-9 6z" fill="#fff"/>

<!-- timeline controls -->
<g fill="#666"><rect x="10" y="978" width="2" height="11"/><polygon points="21,978 21,989 13,983.500"/>
<polygon points="42,978 42,989 34,983.500"/><rect x="43.500" y="981" width="2.500" height="5"/>
<polygon points="60,976 60,991 73,983.500"/>
<rect x="84" y="981" width="2.500" height="5"/><polygon points="88,978 88,989 97,983.500"/>
<polygon points="110,978 110,989 119,983.500"/><rect x="119.500" y="978" width="2" height="11"/></g>
<use href="#sk" x="145" y="974"/><use href="#ex" x="169" y="974"/><use href="#sk" x="193" y="974"/><use href="#ex" x="217" y="974"/><use href="#sk" x="241" y="974"/><use href="#ex" x="265" y="974"/>
<polygon points="296,975 296,990 289,990" fill="#eee" stroke="#888"/><polygon points="297,975 304,990 297,990" fill="#62addf"/>
<use href="#sk" x="313" y="974"/><use href="#ex" x="337" y="974"/>
<path d="M361 984l6-6h9v12h-12l-3-3z" fill="#e4e4e4" stroke="#888"/><path d="M363 980l5-5 7 3-5 5z" fill="#62addf"/>
<path d="M153.500 994v4.500h216V994M177.500 994v4M201.500 994v4M225.500 994v4M249.500 994v4M273.500 994v4M297.500 994v4M321.500 994v4M345.500 994v4" fill="none" stroke="#c6c6c6" stroke-width="1.500"/>
<polygon points="375,968 387,968 387,971 382.500,976 382.500,1000 380,1000 380,976 375,971" fill="#666"/>
<circle cx="1497.500" cy="983" r="4.500" fill="none" stroke="#666" stroke-width="3"/><circle cx="1497.500" cy="983" r="6.200" fill="none" stroke="#666" stroke-width="2.200" stroke-dasharray="2.430 2.430"/>
</svg>
</div></body></html>
